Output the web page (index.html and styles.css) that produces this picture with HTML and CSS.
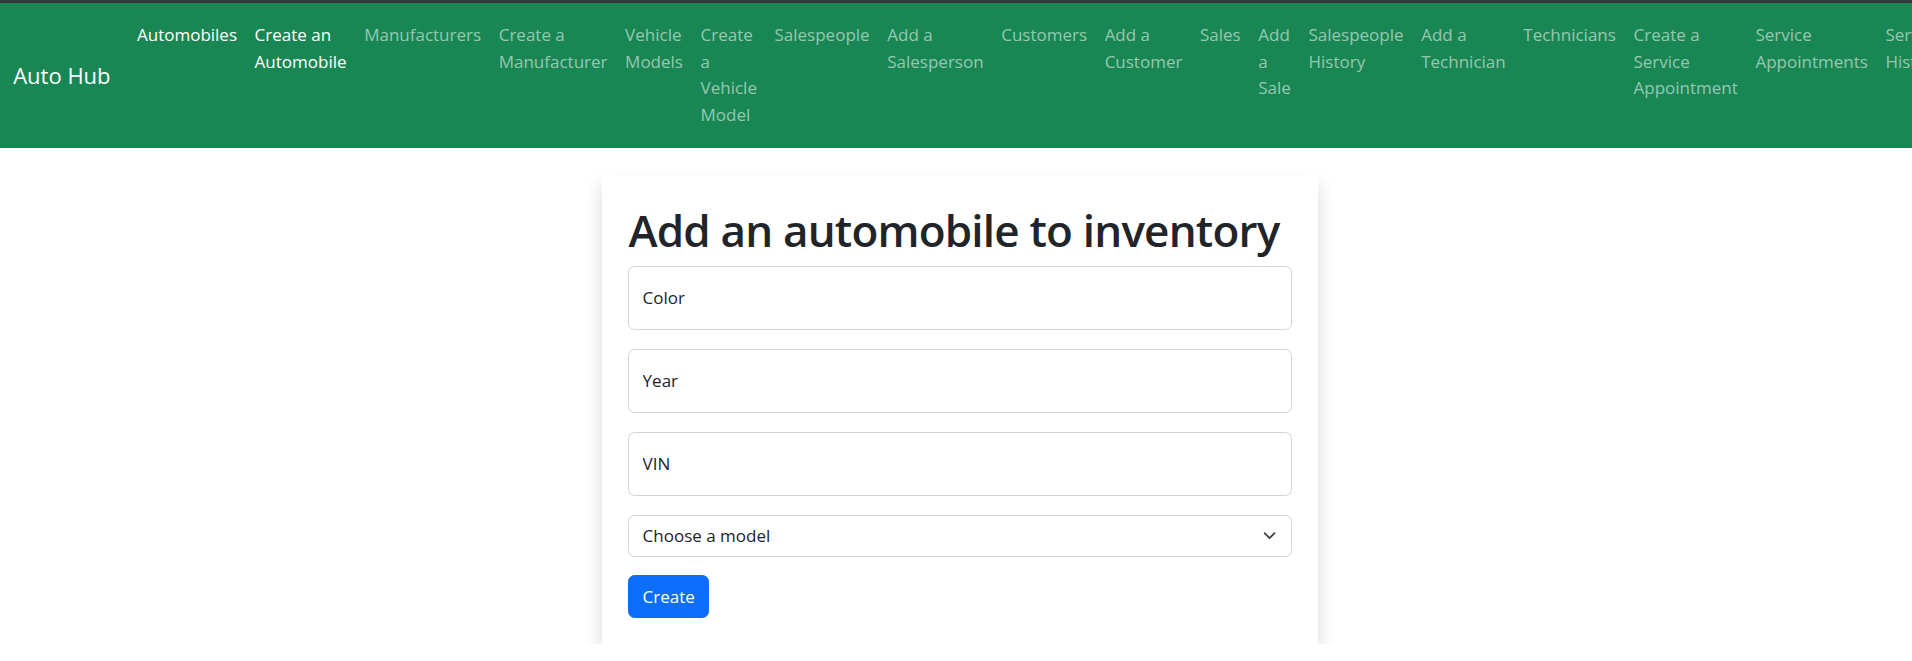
FILE: index.html
```html
<!DOCTYPE html>
<html lang="en">
<head>
<meta charset="utf-8">
<title>Auto Hub</title>
<link rel="stylesheet" href="styles.css">
</head>
<body>
<div class="topbar"></div>
<nav class="navbar">
  <div class="navbar-inner">
    <a class="brand" href="#">Auto Hub</a>
    <ul class="nav-list">
      <li class="nav-item"><a class="nav-link active" href="#">Automobiles</a></li>
      <li class="nav-item"><a class="nav-link active" href="#">Create an Automobile</a></li>
      <li class="nav-item"><a class="nav-link" href="#">Manufacturers</a></li>
      <li class="nav-item"><a class="nav-link" href="#">Create a Manufacturer</a></li>
      <li class="nav-item"><a class="nav-link" href="#">Vehicle Models</a></li>
      <li class="nav-item"><a class="nav-link" href="#">Create a Vehicle Model</a></li>
      <li class="nav-item"><a class="nav-link" href="#">Salespeople</a></li>
      <li class="nav-item"><a class="nav-link" href="#">Add a Salesperson</a></li>
      <li class="nav-item"><a class="nav-link" href="#">Customers</a></li>
      <li class="nav-item"><a class="nav-link" href="#">Add a Customer</a></li>
      <li class="nav-item"><a class="nav-link" href="#">Sales</a></li>
      <li class="nav-item"><a class="nav-link" href="#">Add a Sale</a></li>
      <li class="nav-item"><a class="nav-link" href="#">Salespeople History</a></li>
      <li class="nav-item"><a class="nav-link" href="#">Add a Technician</a></li>
      <li class="nav-item"><a class="nav-link" href="#">Technicians</a></li>
      <li class="nav-item"><a class="nav-link" href="#">Create a Service Appointment</a></li>
      <li class="nav-item"><a class="nav-link" href="#">Service Appointments</a></li>
      <li class="nav-item"><a class="nav-link" href="#">Service History</a></li>
    </ul>
  </div>
</nav>
<main class="main">
  <div class="card">
    <h1 class="title">Add an automobile to inventory</h1>
    <form class="form">
      <input class="field" type="text" placeholder="Color">
      <input class="field" type="text" placeholder="Year">
      <input class="field" type="text" placeholder="VIN">
      <div class="select-wrap">
        <select class="select">
          <option>Choose a model</option>
        </select>
        <svg class="chevron" viewBox="0 0 16 16" aria-hidden="true"><path d="M2 5l6 6 6-6" fill="none" stroke="#343a40" stroke-width="2" stroke-linecap="round" stroke-linejoin="round"/></svg>
      </div>
      <button class="btn" type="button">Create</button>
    </form>
  </div>
</main>
</body>
</html>
```

FILE: styles.css
```css
* {
  box-sizing: border-box;
}

html {
  overflow-x: hidden;
}

body {
  margin: 0;
  font-family: "Open Sans", "Noto Sans", "Liberation Sans", sans-serif;
  font-size: 17px;
  line-height: 26.4px;
  color: #212529;
  background: #fff;
}

.topbar {
  height: 3px;
  background: #37373a;
}

.navbar {
  background: #198754;
  padding: 10.1px 0;
}

.navbar-inner {
  display: flex;
  flex-wrap: nowrap;
  align-items: center;
  padding: 0 13.2px;
}

.brand {
  flex-shrink: 0;
  font-size: 22px;
  line-height: 33px;
  padding: 5.5px 0;
  margin-right: 17.6px;
  color: #fff;
  text-decoration: none;
  white-space: nowrap;
}

.nav-list {
  display: flex;
  flex-direction: row;
  list-style: none;
  margin: 0;
  padding: 0;
}

.nav-item {
  display: block;
}

.nav-link {
  display: block;
  padding: 8.8px;
  font-size: 17px;
  line-height: 26.8px;
  color: rgba(255, 255, 255, 0.55);
  text-decoration: none;
}

.nav-link.active {
  color: #fff;
}

.main {
  display: flex;
  justify-content: center;
  padding: 27px 0 0 8px;
}

.card {
  width: 716px;
  background: #fff;
  padding: 29px 26.4px 26.4px;
  box-shadow: 0 8.8px 17.6px rgba(0, 0, 0, 0.15);
}

.title {
  margin: 0 0 8.8px;
  font-size: 44px;
  line-height: 52.8px;
  font-weight: 600;
  letter-spacing: -0.8px;
  white-space: nowrap;
  color: #212529;
}

.form {
  display: flex;
  flex-direction: column;
  gap: 18.5px;
}

.field {
  display: block;
  width: 100%;
  height: 64.5px;
  padding: 0 13.2px;
  font-family: inherit;
  font-size: 17px;
  color: #212529;
  background: #fff;
  border: 1px solid #ced4da;
  border-radius: 6.6px;
  outline: none;
}

.field::placeholder {
  color: #212529;
  opacity: 1;
}

.select-wrap {
  position: relative;
}

.select {
  display: block;
  width: 100%;
  height: 42px;
  padding: 0 40px 0 13.2px;
  font-family: inherit;
  font-size: 17px;
  color: #212529;
  background: #fff;
  border: 1px solid #ced4da;
  border-radius: 6.6px;
  appearance: none;
  -webkit-appearance: none;
  outline: none;
}

.chevron {
  position: absolute;
  right: 15.4px;
  top: 50%;
  width: 13.2px;
  height: 13.2px;
  margin-top: -6.6px;
  pointer-events: none;
}

.btn {
  align-self: flex-start;
  height: 43px;
  padding: 0 13.2px;
  font-family: inherit;
  font-size: 17px;
  color: #fff;
  background: #0d6efd;
  border: 1px solid #0d6efd;
  border-radius: 6.6px;
  cursor: pointer;
}
```
